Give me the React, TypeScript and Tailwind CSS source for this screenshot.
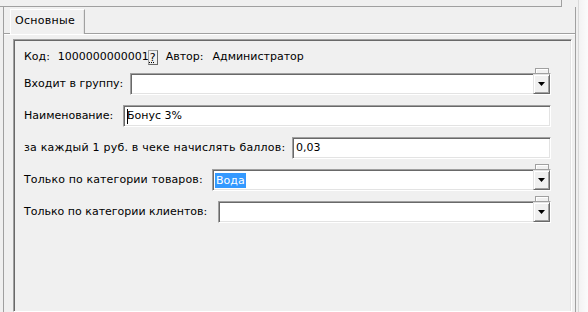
import React from "react"

const sunken =
  "border border-t-[#a0a0a0] border-l-[#a0a0a0] border-r-white border-b-white shadow-[inset_1px_1px_0_#696969,inset_-1px_-1px_0_#e3e3e3] bg-white"

const DropButton = () => (
  <div className="w-[17px] h-full bg-[#f0f0f0] border border-t-[#e3e3e3] border-l-[#e3e3e3] border-r-[#696969] border-b-[#696969] shadow-[inset_1px_1px_0_#ffffff,inset_-1px_-1px_0_#a0a0a0] flex items-center justify-center">
    <svg width="7" height="4" viewBox="0 0 7 4">
      <polygon points="0,0 7,0 3.5,4" fill="#000" />
    </svg>
  </div>
)

const Combo = ({ value, selected }: { value?: string; selected?: boolean }) => (
  <div className={`relative flex-1 h-[22px] flex ${sunken}`}>
    <div className="absolute top-[-6px] right-[1px] w-[14px] h-[5px] bg-[#f0f0f0] border border-b-0 border-[#a0a0a0] shadow-[inset_1px_1px_0_#ffffff]" />
    <div className="flex-1 flex items-center pl-[2px]">
      {value && (
        <span className={selected ? "bg-[#3399ff] text-white px-[1px] leading-[15px]" : ""}>{value}</span>
      )}
    </div>
    <DropButton />
  </div>
)

const Edit = ({ value, caret }: { value: string; caret?: boolean }) => (
  <div className={`flex-1 h-[22px] flex items-center pl-[3px] ${sunken}`}>
    {caret && <span className="w-px h-[15px] bg-black -mr-px" />}
    <span>{value}</span>
  </div>
)

const Row = ({ label, w, children }: { label: string; w: string; children: React.ReactNode }) => (
  <div className="flex items-center h-[22px]">
    <span className={`${w} shrink-0 whitespace-nowrap`}>{label}</span>
    {children}
  </div>
)

export default function App() {
  return (
    <div className="w-[588px] h-[312px] overflow-hidden bg-[#f0f0f0] flex font-['DejaVu_Sans',Verdana,sans-serif] text-[11px] text-black">
      <div className="w-[578px] flex flex-col shrink-0">
        <div className="h-[7px] w-[562px] shrink-0 border-b border-r border-[#a0a0a0]" />
        <div className="flex-1 ml-[3px] w-[573px] border-l border-r border-[#a0a0a0] flex flex-col">
          <div className="h-[26px] shrink-0 flex items-end pl-[6px]">
            <div className="relative z-10 -mb-px w-[75px] h-[25px] bg-[#f0f0f0] border border-b-0 border-l-white border-t-white border-r-[#a0a0a0] shadow-[inset_-1px_0_0_#e3e3e3] flex items-center pl-[4px] pb-[2px] tracking-[0.3px]">
              Основные
            </div>
          </div>
          <div className="flex-1 border-t border-[#a0a0a0] shadow-[inset_0_1px_0_#ffffff] pl-[9px] pt-[5px] pr-[3px] flex">
            <div className="flex-1 border border-t-[#a0a0a0] border-l-[#a0a0a0] border-r-white border-b-white shadow-[inset_1px_1px_0_#696969,inset_-1px_0_0_#e3e3e3] pl-[10px] pr-[20px] pt-[6px] flex flex-col">
              <div className="flex items-center h-[22px] whitespace-nowrap">
                <span>Код:</span>
                <span className="ml-[8px]">1000000000001</span>
                <span className="ml-[-1px] h-[15px] px-[1px] border border-[#a0a0a0] border-r-[#696969] border-b-[#696969] leading-[13px] underline decoration-dotted">?</span>
                <span className="ml-[8px]">Автор:</span>
                <span className="ml-[9px]">Администратор</span>
              </div>
              <div className="mt-[5px] flex flex-col gap-[10px]">
                <Row label="Входит в группу:" w="w-[106px]">
                  <Combo />
                </Row>
                <Row label="Наименование:" w="w-[99px]">
                  <Edit value="Бонус 3%" caret />
                </Row>
                <Row label="за каждый 1 руб. в чеке начислять баллов:" w="w-[268px] tracking-[0.22px]">
                  <Edit value="0,03" />
                </Row>
                <Row label="Только по категории товаров:" w="w-[188px] tracking-[0.12px]">
                  <Combo value="Вода" selected />
                </Row>
                <Row label="Только по категории клиентов:" w="w-[194px]">
                  <Combo />
                </Row>
              </div>
            </div>
          </div>
        </div>
      </div>
      <div className="flex-1 border-l border-[#d9d9d9] bg-gradient-to-r from-[#f3f3f3] to-[#fbfbfb]" />
    </div>
  )
}
